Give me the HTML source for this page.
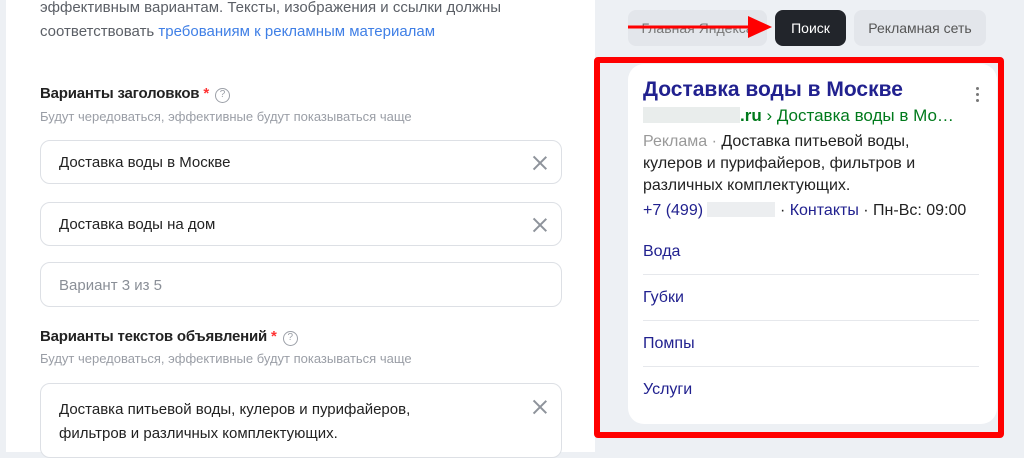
<!DOCTYPE html>
<html><head><meta charset="utf-8"><style>
*{margin:0;padding:0;box-sizing:border-box}
body{width:1024px;height:452px;overflow:hidden;background:#edf0f4;font-family:"Liberation Sans",sans-serif;position:relative}
.a{position:absolute;white-space:nowrap}
.left{position:absolute;left:6px;top:0;width:589px;height:452px;background:#fff}
.t{font-size:15px;color:#5b5f66}
.lbl{font-size:15px;color:#222;font-weight:bold;letter-spacing:-.2px}
.sub{font-size:13px;color:#9a9ea6}
.inp{position:absolute;left:40px;width:522px;border:1px solid #dde0e5;border-radius:10px;background:#fff}
.inp span{position:absolute;left:18px;font-size:15px;color:#222}
.x{position:absolute;right:14px;width:14px;height:14px}
.x:before,.x:after{content:"";position:absolute;left:6px;top:-2px;width:1.5px;height:18px;background:#8e939b;transform:rotate(45deg)}
.x:after{transform:rotate(-45deg)}
.q{display:inline-block;width:15px;height:15px;border:1.5px solid #9ca0a8;border-radius:50%;font-size:10px;color:#9ca0a8;text-align:center;line-height:12px;font-weight:normal;margin-left:6px;vertical-align:1px}
.btn{position:absolute;top:10px;height:36px;border-radius:8px;background:#e3e6eb;font-size:14px;color:#555;text-align:center;line-height:36px}
.card{position:absolute;left:628px;top:64px;width:369px;height:360px;background:#fff;border-radius:16px}
.sl{position:absolute;left:643px;font-size:16px;color:#21218f}
.sep{position:absolute;left:643px;width:336px;height:1px;background:#e6e8ec}
</style></head><body>
<div class="left"></div>
<div class="a t" style="left:40px;top:-1px">эффективным вариантам. Тексты, изображения и ссылки должны</div>
<div class="a t" style="left:40px;top:23px">соответствовать <span style="color:#3f7fe6">требованиям к рекламным материалам</span></div>

<div class="a lbl" style="left:40px;top:85px">Варианты заголовков <span style="color:#f33">*</span><span class="q">?</span></div>
<div class="a sub" style="left:40px;top:109px">Будут чередоваться, эффективные будут показываться чаще</div>
<div class="inp" style="top:140px;height:44px"><span style="top:13px">Доставка воды в Москве</span><i class="x" style="top:15px"></i></div>
<div class="inp" style="top:202px;height:44px"><span style="top:13px">Доставка воды на дом</span><i class="x" style="top:15px"></i></div>
<div class="inp" style="top:262px;height:45px"><span style="top:14px;color:#8a8f97">Вариант 3 из 5</span></div>

<div class="a lbl" style="left:40px;top:328px">Варианты текстов объявлений <span style="color:#f33">*</span><span class="q">?</span></div>
<div class="a sub" style="left:40px;top:351px">Будут чередоваться, эффективные будут показываться чаще</div>
<div class="inp" style="top:383px;height:75px"><span style="top:14px;line-height:24px">Доставка питьевой воды, кулеров и пурифайеров,<br>фильтров и различных комплектующих.</span><i class="x" style="top:16px"></i></div>

<div class="btn" style="left:628px;width:139px;color:#777">Главная Яндекса</div>
<div class="btn" style="left:775px;width:71px;background:#22252b;color:#fff">Поиск</div>
<div class="btn" style="left:854px;width:132px">Рекламная сеть</div>
<svg class="a" style="left:626px;top:14px" width="150" height="28"><line x1="2" y1="13" x2="130" y2="13" stroke="#f00" stroke-width="3"/><polygon points="122,2 146,13 122,24" fill="#f00"/></svg>

<div class="a" style="left:594px;top:57px;width:410px;height:381px;border:6px solid #f00;border-radius:4px"></div>
<div class="card"></div>
<div class="a" style="left:643px;top:78px;font-size:21px;font-weight:bold;color:#21218f">Доставка воды в Москве</div>
<div class="a" style="left:976px;top:87px;width:4px;line-height:5px;font-size:0">
<i style="display:block;width:3px;height:3px;background:#777;border-radius:50%;margin-bottom:3px"></i><i style="display:block;width:3px;height:3px;background:#777;border-radius:50%;margin-bottom:3px"></i><i style="display:block;width:3px;height:3px;background:#777;border-radius:50%"></i></div>
<div class="a" style="left:643px;top:107px;width:97px;height:16px;background:#e9edec"></div>
<div class="a" style="left:740px;top:106px;font-size:17px;color:#007a1c"><b>.ru</b> › Доставка воды в Мо…</div>
<div class="a" style="left:643px;top:131px;font-size:16px;line-height:22px;color:#222"><span style="color:#999">Реклама ·</span> Доставка питьевой воды,<br>кулеров и пурифайеров, фильтров и<br>различных комплектующих.</div>
<div class="a" style="left:643px;top:202px;font-size:16px;color:#21218f;width:336px;overflow:hidden">+7 (499) <span style="display:inline-block;width:68px;height:15px;background:#eceef0;vertical-align:-2px"></span> <span style="color:#222">·</span> Контакты <span style="color:#222">·</span> <span style="color:#222">Пн-Вс: 09:00</span></div>
<div class="sl" style="top:243px">Вода</div><div class="sep" style="top:274px"></div>
<div class="sl" style="top:289px">Губки</div><div class="sep" style="top:320px"></div>
<div class="sl" style="top:335px">Помпы</div><div class="sep" style="top:366px"></div>
<div class="sl" style="top:381px">Услуги</div>
</body></html>
